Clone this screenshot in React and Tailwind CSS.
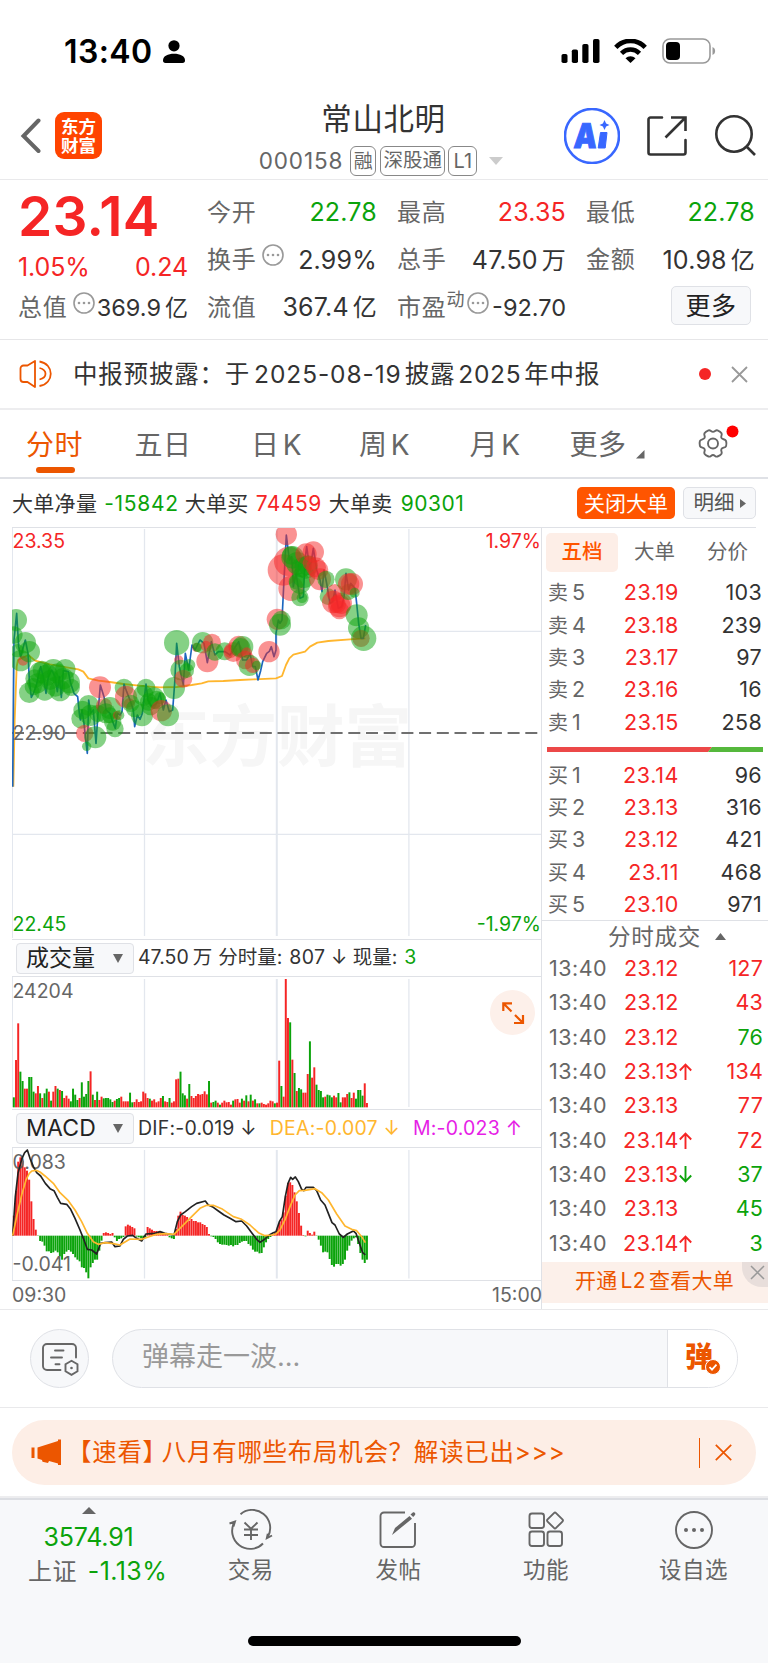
import React from "react";

const UP = "#f52525";
const DOWN = "#0ba30b";

const quoteRows = [
	[
		{ label: "今开", value: "22.78", color: "text-[#0ba30b]" },
		{ label: "最高", value: "23.35", color: "text-[#f52525]" },
		{ label: "最低", value: "22.78", color: "text-[#0ba30b]" },
	],
	[
		{ label: "换手", value: "2.99%", color: "text-[#333]", more: true },
		{ label: "总手", value: "47.50", unit: "万", color: "text-[#333]" },
		{ label: "金额", value: "10.98", unit: "亿", color: "text-[#333]" },
	],
];

const periodTabs = [
	{ label: "分时", width: "w-[109px]", active: true },
	{ label: "五日", width: "w-[108px]" },
	{ label: "日 K", width: "w-[119px]" },
	{ label: "周 K", width: "w-[97px]" },
	{ label: "月 K", width: "w-[124px]" },
	{ label: "更多", width: "w-[82px]" },
];

const asks = [
	["卖", 5, "23.19", 103],
	["卖", 4, "23.18", 239],
	["卖", 3, "23.17", 97],
	["卖", 2, "23.16", 16],
	["卖", 1, "23.15", 258],
];

const bids = [
	["买", 1, "23.14", 96],
	["买", 2, "23.13", 316],
	["买", 3, "23.12", 421],
	["买", 4, "23.11", 468],
	["买", 5, "23.10", 971],
];

const trades = [
	{ price: "23.12", volume: 127, up: true },
	{ price: "23.12", volume: 43, up: true },
	{ price: "23.12", volume: 76 },
	{ price: "23.13", volume: 134, up: true, arrow: "up" },
	{ price: "23.13", volume: 77, up: true },
	{ price: "23.14", volume: 72, up: true, arrow: "up" },
	{ price: "23.13", volume: 37, arrow: "down" },
	{ price: "23.13", volume: 45 },
	{ price: "23.14", volume: 3, arrow: "up" },
];

// All chart data is stored at 3x and scaled down inside the svg groups
const priceLine =
	"38,920 42,480 50,400 56,500 62,530 70,500 76,480 84,520 88,600 94,652 100,640 108,620 115,590 122,560 130,590 138,640 145,590 155,570 165,590 172,635 178,590 184,652 190,572 205,575 212,610 222,640 233,650 238,700 241,720 246,690 252,730 256,770 262,820 266,660 272,700 280,690 288,790 294,700 301,615 312,650 318,690 330,700 338,725 346,745 352,700 360,705 366,695 372,612 380,635 390,660 400,690 404,740 412,705 420,718 427,700 438,612 444,660 455,680 470,670 480,640 490,690 498,660 508,695 518,690 524,610 530,490 538,560 550,615 556,520 566,570 576,495 585,510 600,480 612,490 622,548 634,485 645,525 655,515 675,515 690,525 700,510 716,485 728,540 740,540 750,520 758,560 766,560 774,600 782,572 788,545 800,520 808,514 814,500 822,530 828,510 828,460 835,420 840,430 846,420 852,300 859,165 868,240 875,230 880,320 888,280 900,355 910,350 915,240 920,200 930,270 940,205 950,270 960,300 966,335 972,270 980,310 990,370 998,365 1005,330 1015,385 1025,380 1032,350 1038,280 1046,330 1052,310 1065,325 1070,370 1076,430 1083,475 1090,475 1097,435";

const averageLine =
	"40,920 44,720 50,560 54,540 85,525 105,542 150,553 200,562 235,568 250,575 265,595 295,602 330,606 370,612 410,616 450,620 480,622 530,621 575,615 605,610 625,604 670,603 720,600 760,598 828,595 846,588 858,555 868,535 880,524 915,515 930,500 952,488 985,483 1050,478 1096,475";

// [cx, cy, r]
const sellDots = [
	[48, 420, 33], [42, 465, 26], [76, 488, 32], [88, 515, 32], [62, 542, 32], [52, 512, 20],
	[104, 596, 28], [120, 578, 32], [88, 638, 31], [100, 620, 26], [112, 610, 30], [134, 630, 32],
	[126, 570, 28], [150, 600, 30], [160, 570, 33], [196, 568, 31], [172, 580, 30], [180, 632, 32],
	[166, 620, 30], [208, 608, 32], [214, 622, 26], [190, 596, 32], [142, 585, 32], [244, 716, 30],
	[248, 690, 28], [266, 676, 31], [272, 706, 32], [286, 772, 33], [294, 700, 26], [260, 799, 14],
	[330, 684, 33], [318, 700, 30], [330, 706, 24], [345, 746, 26], [338, 726, 26], [358, 706, 15],
	[372, 624, 28], [392, 670, 26], [404, 686, 26], [426, 706, 33], [438, 624, 28], [430, 646, 31],
	[452, 678, 28], [462, 654, 32], [470, 660, 28], [446, 666, 26], [480, 654, 18], [504, 706, 33],
	[530, 488, 38], [522, 624, 33], [542, 570, 31], [568, 555, 18], [560, 572, 22], [608, 488, 32],
	[645, 516, 26], [674, 514, 27], [728, 500, 32], [722, 504, 30], [748, 556, 32], [770, 556, 14],
	[592, 502, 14], [844, 420, 28], [840, 434, 33], [874, 226, 28], [878, 232, 34], [892, 250, 34],
	[905, 262, 30], [912, 290, 34], [900, 310, 32], [890, 305, 24], [918, 262, 34], [900, 353, 26],
	[906, 353, 16], [924, 256, 30], [978, 298, 26], [984, 350, 25], [1038, 298, 33], [1045, 336, 24],
	[1064, 338, 15], [1070, 406, 33], [1076, 444, 32], [1091, 475, 38],
];

const buyDots = [
	[69, 542, 15], [254, 760, 26], [300, 622, 33], [312, 678, 24], [352, 706, 13], [378, 650, 33],
	[388, 672, 17], [484, 692, 32], [536, 540, 14], [550, 596, 27], [590, 502, 14], [622, 544, 33],
	[636, 488, 27], [618, 498, 16], [700, 516, 30], [716, 498, 31], [692, 514, 20], [736, 540, 28],
	[740, 518, 16], [758, 556, 23], [807, 515, 32], [832, 418, 32], [859, 163, 32], [850, 270, 47],
	[866, 244, 44], [873, 325, 38], [918, 222, 32], [940, 216, 32], [930, 250, 22], [948, 262, 30],
	[955, 270, 30], [960, 298, 33], [1005, 338, 26], [1000, 366, 34], [1018, 378, 34],
	[1018, 390, 28], [1024, 370, 32], [1046, 312, 32], [1056, 312, 33], [1012, 374, 26], [1083, 475, 26],
];

// painted in time order so that later orders lie on top
const orderDots = [
	...sellDots.map(([x, y, r]) => ({ x, y, r, fill: DOWN })),
	...buyDots.map(([x, y, r]) => ({ x, y, r, fill: UP })),
].sort((a, b) => a.x - b.x);

const volumes =
	"g30 r142 r252 g107 g79 r56 r56 g91 g91 g47 r42 r64 g42 r28 g42 g56 r47 g20 r47 r64 g56 r52 g49 r28 r35 r26 g18 g56 g38 g22 r28 g75 g32 g40 g79 r108 g38 r22 g47 r22 r32 g27 g28 g28 g24 g16 r20 g25 g28 r32 r18 r18 r18 g44 g15 r16 r24 r16 r18 r47 r42 r28 g26 r20 r24 r15 r18 r28 g34 r18 r16 g28 r14 r18 r84 r86 g107 g42 g36 r26 g70 r34 r28 r34 r40 r38 r40 r48 r39 g79 r14 g16 g20 r14 g8 r14 r20 r15 r16 r8 g20 r24 r25 r14 g26 r20 g36 r18 g38 r20 g24 r12 g12 r14 r10 r8 r12 r20 r18 g12 r14 r140 g64 r32 r385 r268 g255 r143 g103 r49 g58 g54 r44 r44 r100 g198 r89 r120 g68 g52 g49 g30 r32 g38 g36 g30 r35 r30 g43 g15 r30 r30 r40 g45 r28 r44 g26 g52 g52 g35 r72 r13".split(" ");

const macdBars = [
	60, 135, 222, 235, 225, 205, 195, 168, 103, 50, 18, 0, -16, -18, -30, -47, -47, -52, -50, -45, -50,
	-62, -72, -55, -48, -43, -48, -55, -65, -72, -77, -95, -97, -110, -128, -95, -82, -72, -72, -45, -15,
	8, 10, 8, 5, 8, -5, -16, -10, -8, -4, 28, 33, 30, 26, 22, -3, -5, -8, -10, -6, 26, 22, 18, 14, 14, 12,
	10, 8, 5, 3, -5, -8, -10, 20, 60, 72, 62, 60, 56, 45, 50, 44, 44, 40, 40, 35, 32, 26, 5, -2, -4, -10,
	-20, -25, -27, -27, -28, -30, -28, -32, -28, -28, -22, -18, -16, -16, -25, -30, -42, -48, -48, -53, -52,
	-35, -20, -10, -4, 2, 8, 20, 38, 48, 70, 120, 158, 160, 152, 130, 103, 68, 30, 2, -2, 15, 8, 3, 12, 0,
	-12, -30, -50, -48, -50, -70, -88, -93, -85, -85, -90, -85, -72, -45, -30, -15, -8, -5, -25, -52, -72,
	-82, -72,
];

const difLine =
	"38,947 46,830 54,760 66,715 74,698 82,690 90,715 100,740 110,758 122,768 136,790 150,806 162,812 172,832 182,850 200,853 212,868 225,895 240,930 250,955 262,988 275,990 290,1002 302,970 316,968 335,966 345,980 360,978 370,958 382,948 398,946 410,955 425,963 438,942 465,940 480,935 495,940 522,945 532,905 542,885 556,875 575,860 590,850 616,843 625,855 640,862 655,873 672,885 690,895 708,905 725,903 740,918 755,938 770,958 780,967 795,957 808,945 820,938 828,935 838,905 847,890 856,830 864,790 872,772 878,778 886,771 895,785 905,808 912,812 918,802 940,802 950,812 962,840 975,855 985,880 996,908 1005,915 1018,942 1030,952 1042,942 1060,933 1068,940 1080,975 1088,998 1096,1005";

const deaLine =
	"38,947 50,890 65,825 78,780 88,760 96,753 108,751 120,756 135,768 160,790 180,818 205,842 225,870 245,905 262,940 280,965 295,973 315,968 340,971 360,975 390,957 425,958 465,944 495,941 522,943 545,920 575,890 600,865 620,856 640,856 665,866 700,890 725,898 750,915 775,938 795,947 815,945 828,942 840,930 855,900 870,860 885,825 898,812 915,811 945,806 965,818 985,840 1010,882 1035,918 1055,928 1070,932 1085,950 1096,968";

const barX = (i) => 38.5 + i * 6.58;

const StatusBar = () => (
	<div className="flex h-[100px] items-start pt-9 pl-16">
		<span className="text-[32px] leading-[31px] font-semibold text-black tracking-[0.400px]">13:40</span>
		<svg className="ml-[10px] mt-1" width="22" height="23" viewBox="0 0 22 23">
			<circle cx="11" cy="5.8" r="5.6" />
			<path d="M0 20.5C0 16 5 13.8 11 13.8s11 2.200 11 6.700c0 1.600-.8 2.500-2.500 2.500h-17C.8 23 0 22.100 0 20.500z" />
		</svg>
		<svg className="ml-auto mt-[3px]" width="39" height="24" viewBox="0 0 39 24">
			<rect x="0.500" y="15" width="6" height="9" rx="1.800" />
			<rect x="10.800" y="10.500" width="6.200" height="13.500" rx="1.800" />
			<rect x="21.300" y="5" width="6.200" height="19" rx="1.800" />
			<rect x="32" y="0" width="6.500" height="24" rx="1.800" />
		</svg>
		<svg className="ml-[14px] mt-[3px]" width="33" height="24" viewBox="0 0 33 24" fill="none" stroke="#000">
			<path d="M1.800 8.300C10-.3 23-.3 31.200 8.300" strokeWidth="4.600" />
			<path d="M7.500 14.300c5.300-5 12.700-5 18 0" strokeWidth="4.600" />
			<path d="M11.500 19.200c2.800-2.700 7.200-2.700 10 0l-5 4.800z" fill="#000" stroke="none" />
		</svg>
		<svg className="ml-[15px] mr-[52px] mt-[2px]" width="54" height="26" viewBox="0 0 54 26">
			<rect x="1" y="1" width="47" height="24" rx="7" fill="none" stroke="#999" strokeWidth="1.600" />
			<rect x="4" y="4" width="14" height="18" rx="4" />
			<path d="M50.500 9c3.500 1.300 3.500 6.700 0 8z" fill="#999" />
		</svg>
	</div>
);

const Header = () => (
	<header className="flex h-20 border-b border-[#e9e9eb]">
		<div className="flex w-[250px] pl-5">
			<svg className="mt-[18px]" width="22" height="36" viewBox="0 0 22 36" fill="none" stroke="#666" strokeWidth="4" strokeLinecap="round">
				<path d="M18.500 2.500L3.500 18l15 15" />
			</svg>
			<div className="ml-[13px] mt-3 flex size-[47px] flex-col items-center justify-center rounded-[9px] bg-[#ff4400] text-[17.500px] leading-[19px] font-bold text-white">
				<span>东方</span>
				<span>财富</span>
			</div>
		</div>
		<div className="flex w-[267px] flex-col items-center">
			<h1 className="mt-[3px] text-[30.500px] leading-8 tracking-[0.600px] text-[#333]">常山北明</h1>
			<div className="-ml-[5px] mt-[11px] flex h-[30px] items-center text-[#666]">
				<span className="text-[22.500px] tracking-[0.900px]">000158</span>
				<span className="ml-[7px] flex h-[30px] w-[26px] items-center justify-center rounded-md border border-[#888] text-[19px]">融</span>
				<span className="ml-1 flex h-[30px] w-[65px] items-center justify-center rounded-md border border-[#888] text-[19.500px]">深股通</span>
				<span className="ml-[3px] flex h-[30px] w-[29px] items-center justify-center rounded-md border border-[#888] text-[20px]">L1</span>
				<svg className="ml-3" width="14" height="8" viewBox="0 0 14 8">
					<path d="M0 0h14L7 8z" fill="#ccc" />
				</svg>
			</div>
		</div>
		<div className="flex flex-1 items-start">
			<svg className="ml-[47px] mt-2" width="56" height="56" viewBox="0 0 56 56">
				<circle cx="28" cy="28" r="27" fill="none" stroke="#3867ff" strokeWidth="2.600" />
				<text x="9" y="40" fontFamily="Inter" fontSize="34" fontWeight="900" fill="#3867ff" stroke="#3867ff" strokeWidth="1" textLength="23" lengthAdjust="spacingAndGlyphs" transform="skewX(-4) translate(3 0)">A</text>
				<path d="M36.500 24.500h6.500l-1.800 15.500h-7z" fill="#3867ff" stroke="#3867ff" strokeWidth="1" />
				<path d="M40.500 12l1.600 3.400 3.400 1.600-3.400 1.600-1.600 3.400-1.600-3.400-3.400-1.600 3.400-1.600z" fill="#3867ff" />
			</svg>
			<svg className="ml-[27px] mt-4" width="40" height="40" viewBox="0 0 40 40" fill="none" stroke="#333" strokeWidth="2.600">
				<path d="M15 1.500H3.500a2 2 0 0 0-2 2v33a2 2 0 0 0 2 2h33a2 2 0 0 0 2-2V24" strokeLinecap="round" />
				<path d="M24 1.500h14.500V15M38 2L18.500 21.500" />
			</svg>
			<svg className="ml-[28px] mt-[15px]" width="42" height="42" viewBox="0 0 42 42" fill="none" stroke="#333" strokeWidth="2.600">
				<circle cx="19" cy="19" r="17.700" />
				<path d="M31.500 31.500L40 40" />
			</svg>
		</div>
	</header>
);

const MoreDot = ({ className }) => (
	<svg className={className} width="22" height="22" viewBox="0 0 22 22" fill="#999">
		<circle cx="11" cy="11" r="10" fill="none" stroke="#999" strokeWidth="1.600" />
		<circle cx="6" cy="11" r="1.300" />
		<circle cx="11" cy="11" r="1.300" />
		<circle cx="16" cy="11" r="1.300" />
	</svg>
);

const QuoteCell = ({ label, value, unit, color, more }) => (
	<div className="flex items-center">
		<span className="text-[24px] tracking-[0.800px] text-[#666]">{label}</span>
		{more && <MoreDot className="ml-[5px] mb-2.5" />}
		<span className={"ml-auto text-[25px] tracking-[0.200px] " + color}>
			{value}
			{unit && <span className="ml-1 text-[24px]">{unit}</span>}
		</span>
	</div>
);

const Quote = () => (
	<section className="flex h-40 border-b border-[#e6e6e8] text-[25px] leading-none">
		<div className="w-[170px] ml-[18px]">
			<div className="h-[63px] pt-[9px] text-[55px] leading-[54px] font-semibold tracking-[0.200px] text-[#f52525]">23.14</div>
			<div className="flex h-[48px] items-center justify-between text-[25px] tracking-[-0.100px] text-[#f52525]">
				<span>1.05%</span>
				<span>0.24</span>
			</div>
			<div className="flex h-[34px] items-center whitespace-nowrap text-[#333]">
				<span className="text-[24px] tracking-[0.800px] text-[#666]">总值</span>
				<MoreDot className="ml-[5px] mb-2.5 shrink-0" />
				<span className="ml-auto text-[23.500px] tracking-[0px]">369.9<span className="ml-1 text-[23px]">亿</span></span>
			</div>
		</div>
		<div className="ml-[19px] w-[547px] pt-[9px]">
			{quoteRows.map((row, i) => (
				<div key={i} className="grid h-[47.500px] grid-cols-[170px_169px_169px] gap-x-5">
					{row.map((cell) => (
						<QuoteCell key={cell.label} {...cell} />
					))}
				</div>
			))}
			<div className="grid h-[47.500px] grid-cols-[170px_169px_169px] gap-x-5">
				<QuoteCell label="流值" value="367.4" unit="亿" color="text-[#333]" />
				<div className="flex items-center whitespace-nowrap">
					<span className="text-[24px] tracking-[0.800px] text-[#666]">市盈</span>
					<span className="mb-4 text-[18px] text-[#666]">动</span>
					<MoreDot className="ml-[2px] mb-2.5 shrink-0" />
					<span className="ml-auto text-[23.500px] tracking-[0px] text-[#333]">-92.70</span>
				</div>
				<div className="flex items-center justify-end">
					<button className="mr-1 mb-1 flex h-[39px] w-20 items-center justify-center rounded-[5px] border border-[#dfe1e6] bg-[#f7f8fa] pt-px text-[25px] tracking-[0.500px] text-[#222]">
						更多
					</button>
				</div>
			</div>
		</div>
	</section>
);

const Notice = () => (
	<section className="flex h-[70px] items-center border-b-2 border-[#ededef] pl-[19px]">
		<svg width="34" height="30" viewBox="0 0 34 30" fill="none" stroke="#ec5600" strokeWidth="1.800">
			<path d="M16 2L8.500 6.500H4.500a3 3 0 0 0-3 3v10.500a3 3 0 0 0 3 3h4L16 28z" strokeLinejoin="round" />
			<path d="M20.500 2.500c15 2.500 15 22 0 24.500M20.500 9c8 2 8 9.500 0 11.500" />
		</svg>
		<p className="ml-5 whitespace-nowrap text-[24.500px] tracking-[0.800px] text-[#333]">
			中报预披露：于<span className="ml-1 mr-[3px] tracking-[0.900px]">2025-08-19</span>披露<span className="mx-[3px] tracking-[0.700px]">2025</span>年中报
		</p>
		<span className="ml-auto size-3 rounded-full bg-[#f52525]" />
		<svg className="ml-5 mr-5" width="17" height="17" viewBox="0 0 17 17" stroke="#999" strokeWidth="1.800">
			<path d="M1 1l15 15M16 1L1 16" />
		</svg>
	</section>
);

const PeriodTabs = () => (
	<nav className="flex h-[69px] border-b-2 border-[#dfe1e6] text-[28px] text-[#666]">
		{periodTabs.map((tab) => (
			<div key={tab.label} className={"flex flex-col items-center pt-[18px] " + tab.width}>
				<span className={"leading-[34px] tracking-[0.500px] [word-spacing:-5px] whitespace-nowrap " + (tab.active ? "text-[#ec5600]" : "")}>{tab.label}</span>
				{tab.active && <span className="mt-[5px] mr-[-1px] h-1.5 w-[39px] rounded-full bg-[#ec5600]" />}
			</div>
		))}
		<svg className="-ml-[3px] mt-10" width="9" height="9" viewBox="0 0 9 9">
			<path d="M8.500 0v8.500H0z" fill="#666" />
		</svg>
		<svg className="ml-[51px] mt-[15px]" width="44" height="40" viewBox="0 0 44 40" fill="none" stroke="#666" strokeWidth="1.900">
			<path d="M12.500 5.500c2-.8 2.500 1.500 4.500 1.500s2.500-2.300 4.500-1.500c2 .8 3.200 1.500 4 2.800 1 2-1 3-.1 4.700s4 1 4.700 3.200c.5 1.700.5 3.100 0 4.800-.7 2.200-3.800 1.400-4.700 3.200s1.100 2.800.1 4.600c-.8 1.300-2 2-4 2.800-2 .8-2.500-1.500-4.500-1.500s-2.500 2.300-4.500 1.500c-2-.8-3.200-1.500-4-2.800-1-1.800 1-2.800.1-4.600s-4-1-4.700-3.200c-.5-1.700-.5-3.100 0-4.800.7-2.200 3.800-1.400 4.700-3.200s-1.100-2.700-.1-4.700c.8-1.300 2-2 4-2.800z" transform="translate(0 -.1)" />
			<circle cx="17" cy="18.500" r="5" />
			<circle cx="36.500" cy="6.500" r="6" fill="#f00" stroke="none" />
		</svg>
	</nav>
);

const OrderSummary = () => (
	<div className="mx-3 flex h-[49px] items-center border-b border-[#dfe1e6] whitespace-nowrap text-[21px] text-[#333]">
		<span className="tracking-[0.300px]">大单净量</span>
		<span className="ml-[7px] tracking-[0.700px] text-[#0ba30b]">-15842</span>
		<span className="ml-[6px] tracking-[0.300px]">大单买</span>
		<span className="ml-[7px] tracking-[0.500px] text-[#f52525]">74459</span>
		<span className="ml-[7px] tracking-[0.300px]">大单卖</span>
		<span className="ml-2 tracking-[0.500px] text-[#0ba30b]">90301</span>
		<button className="ml-auto h-8 w-[98px] rounded-[5px] bg-[#ff5500] text-[21px] text-white">关闭大单</button>
		<button className="ml-2 flex h-8 w-[73px] items-center justify-center rounded-[5px] border border-[#dfe1e6] bg-[#f7f8fa] text-[20.500px] text-[#555]">
			明细
			<svg className="ml-[5px]" width="6" height="9" viewBox="0 0 6 9">
				<path d="M0 0l6 4.500L0 9z" fill="#666" />
			</svg>
		</button>
	</div>
);

const PriceChart = () => (
	<svg className="block" width="530" height="411" viewBox="12 528 530 411" fontFamily="Inter, sans-serif" fontSize="19.500">
		<text x="142" y="761" fontFamily="'Noto Sans CJK SC', sans-serif" fontSize="67.500" fontWeight="700" fill="#f6f6f6">东方财富</text>
		<g stroke="#e3e7ee" fill="none">
			<path d="M12.500 528V938" />
			<path d="M144.500 529V936M408.900 529V936M12 631.400H541M12 834.400H541" strokeWidth="1.300" />
			<path d="M276.800 529V936" strokeWidth="2" />
		</g>
		<path d="M12 733H541" stroke="#707070" strokeWidth="2.200" strokeDasharray="12 5.700" />
		<g transform="translate(0 480) scale(.33333)" fill="none" strokeLinejoin="round">
			<polyline points={averageLine} stroke="#ffb62e" strokeWidth="5.500" />
			<polyline points={priceLine} stroke="#1c66bf" strokeWidth="5" />
			{orderDots.map((dot, i) => (
				<circle key={i} cx={dot.x} cy={dot.y} r={dot.r} fill={dot.fill} fillOpacity=".5" />
			))}
		</g>
		<text x="12.500" y="547.500" fill={UP}>23.35</text>
		<text x="541" y="547.500" textAnchor="end" fill={UP}>1.97%</text>
		<text x="12.500" y="739.500" fill="#666">22.90</text>
		<text x="12.500" y="931" fill={DOWN}>22.45</text>
		<text x="541" y="931" textAnchor="end" fill={DOWN}>-1.97%</text>
	</svg>
);

const IndicatorSelect = ({ children }) => (
	<button className="ml-1 mr-1 flex h-[31px] w-[118px] items-center justify-between rounded-[4px] border border-[#dfe1e6] bg-[#f7f8fa] pl-[9px] pr-2.5 text-[23px] text-[#222]">
		{children}
		<svg width="10" height="9" viewBox="0 0 10 9">
			<path d="M0 0h10L5 9z" fill="#666" />
		</svg>
	</button>
);

const VolumeChart = () => (
	<div className="relative h-[132px]">
		<svg className="block" width="530" height="132" viewBox="12 977 530 132" fontFamily="Inter, sans-serif" fontSize="19.500">
			<g stroke="#e3e7ee" fill="none">
				<path d="M12.500 977V1107" />
				<path d="M144.500 979V1107M408.900 979V1107" strokeWidth="1.300" />
				<path d="M276.800 979V1107" strokeWidth="2" />
			</g>
			<g transform="translate(0 920) scale(.33333)">
				{volumes.map((bar, i) => (
					<rect key={i} x={barX(i)} y={562 - Number(bar.slice(1))} width="5.900" height={bar.slice(1)} fill={bar[0] === "r" ? UP : DOWN} />
				))}
			</g>
			<text x="12.500" y="998" fill="#666">24204</text>
		</svg>
		<button className="absolute right-[6px] top-[13px] flex size-[45px] items-center justify-center rounded-full bg-[#fdf0ea]">
			<svg width="24" height="24" viewBox="0 0 24 24" fill="none" stroke="#ec5600" strokeWidth="2.200">
				<path d="M2.300 10V2.300H11M2.500 2.500l8 8M22 14v8h-9M22 22l-8-8" />
			</svg>
		</button>
	</div>
);

const MacdChart = () => (
	<svg className="block" width="530" height="132" viewBox="12 1148 530 132" fontFamily="Inter, sans-serif" fontSize="19.500">
		<g stroke="#e3e7ee" fill="none">
			<path d="M12.500 1148V1280" />
			<path d="M144.500 1150V1278.500M408.900 1150V1278.500" strokeWidth="1.300" />
			<path d="M276.800 1150V1278.500" strokeWidth="2" />
		</g>
		<g transform="translate(0 920) scale(.33333)">
			{macdBars.map((value, i) => (
				<rect key={i} x={barX(i)} y={value > 0 ? 947 - value : 947} width="5.900" height={Math.max(Math.abs(value), 1)} fill={value > 0 ? UP : DOWN} />
			))}
		</g>
		<text x="12.500" y="1169" fill="#666">0.083</text>
		<text x="12.500" y="1271" fill="#666">-0.041</text>
		<g transform="translate(0 920) scale(.33333)" fill="none" strokeLinejoin="round" strokeWidth="5">
			<polyline points={difLine} stroke="#222" />
			<polyline points={deaLine} stroke="#ffb62e" />
		</g>
	</svg>
);

const Charts = () => (
	<div className="ml-3 w-[530px] border-r border-[#dfe1e6]">
		<PriceChart />
		<div className="flex h-[38px] items-center border-y border-[#dfe1e6] whitespace-nowrap text-[19.500px] text-[#333]">
			<IndicatorSelect>成交量</IndicatorSelect>
			<span>47.50</span>
			<span className="ml-1">万</span>
			<span className="ml-[6px]">分时量:</span>
			<span className="ml-[7px] tracking-[0.300px]">807 ↓</span>
			<span className="ml-[5px]">现量:</span>
			<span className="ml-[7px] text-[#0ba30b]">3</span>
		</div>
		<VolumeChart />
		<div className="flex h-[39px] items-center border-y border-[#dfe1e6] whitespace-nowrap text-[19.500px] tracking-[0.200px] text-[#333]">
			<IndicatorSelect>MACD</IndicatorSelect>
			<span>DIF:-0.019 ↓</span>
			<span className="ml-[13px] text-[#ffb62e]">DEA:-0.007 ↓</span>
			<span className="ml-[13px] text-[#e61ee6]">M:-0.023 ↑</span>
		</div>
		<MacdChart />
		<div className="-mr-px flex h-7 items-center justify-between border-t border-[#dfe1e6] pt-[3px] text-[19.500px] text-[#666]">
			<span>09:30</span>
			<span>15:00</span>
		</div>
	</div>
);

const BookRow = ({ row: [side, level, price, volume] }) => (
	<div className="flex h-[32.300px] items-center pl-[6px] pr-[6px] text-[21.500px]">
		<span className="w-[76px] text-[#666]">
			<span className="mr-1 text-[20px]">{side}</span>
			{level}
		</span>
		<span className="flex w-[55px] justify-end tracking-[0.600px] text-[#f52525]">{price}</span>
		<span className="ml-auto tracking-[0.300px] text-[#333]">{volume}</span>
	</div>
);

const Arrow = ({ up }) => (
	<svg width="13" height="17" viewBox="0 0 13 17" fill="none" stroke={up ? UP : DOWN} strokeWidth="1.900">
		<path d={up ? "M6.500 17V2M.8 7.500L6.500 1.700l5.700 5.800" : "M6.500 0v15M.8 9.500l5.700 5.800 5.700-5.800"} />
	</svg>
);

const OrderBook = () => (
	<aside className="w-[226px]">
		<div className="mt-[5px] ml-[4px] flex h-[39px] items-center text-[20.500px] text-[#666]">
			<span className="flex h-[39px] w-[72px] items-center justify-center rounded-[5px] bg-[#fdeee7] font-medium text-[#ff5500]">五档</span>
			<span className="w-[73px] text-center">大单</span>
			<span className="w-[73px] text-center">分价</span>
		</div>
		<div className="mt-[5px]">
			{asks.map((row) => (
				<BookRow key={row[1]} row={row} />
			))}
		</div>
		<svg className="ml-[5px] mt-[9px] block" width="216" height="5" viewBox="0 0 216 5">
			<path d="M0 0h165l-4 5H0z" fill="#ec4848" />
			<path d="M165 0h51v5h-55z" fill="#55b83c" />
		</svg>
		<div className="mt-[7px] h-[161px]">
			{bids.map((row) => (
				<BookRow key={row[1]} row={row} />
			))}
		</div>
		<div className="flex h-[31px] items-center justify-center border-t border-[#dfe1e6] pt-px text-[22.500px] tracking-[0.700px] text-[#666]">
			<span className="ml-6">分时成交</span>
			<svg className="ml-3.5" width="11" height="7" viewBox="0 0 11 7">
				<path d="M5.500 0L11 7H0z" fill="#666" />
			</svg>
		</div>
		<div className="h-[310.500px]">
			{trades.map((trade, i) => (
				<div key={i} className="flex h-[34.350px] items-center pl-[7px] pr-[5px] text-[21.500px]">
					<span className="w-[75px] tracking-[0.500px] text-[#666]">13:40</span>
					<span className="flex w-[55px] justify-end tracking-[0.600px] text-[#f52525]">{trade.price}</span>
					{trade.arrow && <Arrow up={trade.arrow === "up"} />}
					<span className={"ml-auto tracking-[0.200px] " + (trade.up ? "text-[#f52525]" : "text-[#0ba30b]")}>{trade.volume}</span>
				</div>
			))}
		</div>
		<div className="relative flex h-[41px] items-center bg-[#fcf0ea] pb-1 pl-[33px] text-[21px] tracking-[0.300px] text-[#ec5600]">
			开通<span className="mx-[3px]">L2</span>查看大单
			<span className="absolute top-0 right-0 flex h-[25px] w-[26px] items-center justify-center rounded-bl-[20px] bg-[#e8dedb]">
				<svg className="ml-1 mb-1" width="15" height="15" viewBox="0 0 15 15" stroke="#999" strokeWidth="1.500">
					<path d="M1 1l13 13M14 1L1 14" />
				</svg>
			</span>
		</div>
	</aside>
);

const CommentBar = () => (
	<section className="flex h-[99px] items-center border-y border-[#e9e9eb] pl-[30px]">
		<button className="flex size-[59px] items-center justify-center rounded-full border border-[#dfe1e6] bg-[#f7f8fa]">
			<svg width="38" height="34" viewBox="0 0 38 34" fill="none" stroke="#666" strokeWidth="1.900" strokeLinecap="round">
				<path d="M19.500 28H6a4 4 0 0 1-4-4V6a4 4 0 0 1 4-4h25a4 4 0 0 1 4 4v9.500" />
				<path d="M14 8.500h8.500M10 15.500h11M14.500 22.300h4" />
				<path d="M30.500 19l6 3.500v7l-6 3.500-6-3.500v-7z" transform="translate(0 -.2)" />
				<circle cx="30.500" cy="26" r="1.300" fill="#666" stroke="none" />
			</svg>
		</button>
		<div className="ml-[23px] flex h-[59px] w-[626px] overflow-hidden rounded-full border border-[#dfe1e6] bg-[#f7f8fa]">
			<span className="flex-1 pt-[9px] pl-[29px] text-[27px] leading-9 tracking-[0px] text-[#999]">弹幕走一波...</span>
			<span className="flex w-[70px] items-center border-l border-[#dfe1e6] bg-white pl-[17px]">
				<span className="relative -mt-1 text-[28px] font-black text-[#ec5600]">
					弹
					<svg className="absolute -right-2 -bottom-1" width="16" height="16" viewBox="0 0 16 16">
						<circle cx="8" cy="8" r="7.500" fill="#ec5600" stroke="#fff" />
						<path d="M4.500 8l2.500 2.700 4.500-5" fill="none" stroke="#fff" strokeWidth="1.800" />
					</svg>
				</span>
			</span>
		</div>
	</section>
);

const Promo = () => (
	<section className="h-[90px] border-b-2 border-[#ededef] px-3 pt-3">
		<div className="flex h-[65px] items-center rounded-full bg-[#fdeee6] pl-[19px] text-[24.500px] text-[#ec5600]">
			<svg width="31" height="27" viewBox="0 0 31 27" fill="#ec5600">
				<path d="M.5 8.500h3V19h-3zM6.500 8.500L27 2V.5h3V26h-3v-1.500L18 22l-1 2-5.500-1.200-.5-1.800-4.500-1.500z" />
			</svg>
			<span className="ml-[5px] whitespace-nowrap tracking-[0.700px]"><span className="-mr-1.5">【速看】</span>八月有哪些布局机会？解读已出&gt;&gt;&gt;</span>
			<span className="ml-auto h-[30px] w-px bg-[#ec5600]" />
			<svg className="ml-[15px] mr-6" width="17" height="17" viewBox="0 0 17 17" stroke="#ec5600" strokeWidth="1.700">
				<path d="M.8.8l15.400 15.400M16.200.8L.8 16.200" />
			</svg>
		</div>
	</section>
);

const NavItem = ({ label, children }) => (
	<div className="flex w-[147.600px] flex-col items-center">
		<svg className="mt-[9px]" width="46" height="42" viewBox="0 0 46 42" fill="none" stroke="#666" strokeWidth="1.900">
			{children}
		</svg>
		<span className="mt-[6px] text-[22.500px] leading-[26px] tracking-[0.500px] text-[#666]">{label}</span>
	</div>
);

const BottomNav = () => (
	<footer className="h-[165px] border-t-2 border-[#dcdee3] bg-[#f7f8fa]">
		<div className="flex h-[136px]">
			<div className="w-[177px] pt-[7px]">
				<svg className="ml-[82px] block" width="14" height="7" viewBox="0 0 14 7">
					<path d="M7 0l7 7H0z" fill="#666" />
				</svg>
				<p className="mt-[6px] text-center text-[25px] leading-[34px] tracking-[-0.200px] text-[#0ba30b]">3574.91</p>
				<p className="ml-7 whitespace-nowrap text-[25px] leading-[34px] tracking-[0.400px] text-[#0ba30b]">
					<span className="mr-[11px] text-[24px]  tracking-[0.400px] text-[#666]">上证</span>-1.13%
				</p>
			</div>
			<NavItem label="交易">
				<path d="M12.500 5.200A18 18 0 0 1 40 27.500M35 34.500A18 18 0 0 1 6.500 13M1.500 14.500l5.500-2-1.500 5M44 26.500l-5.200 2.800 1-4.500" />
				<path d="M16.500 13.500l6.500 6.300 6.500-6.300M23 19.800V31M16 20.500h14M16 26h14" />
			</NavItem>
			<NavItem label="发帖">
				<path d="M30 3.500H9a3.500 3.500 0 0 0-3.500 3.500v27.500A3.500 3.500 0 0 0 9 38h27.500a3.500 3.500 0 0 0 3.500-3.500V14" />
				<path d="M17 26l3-7L34.500 7l2.500 2.700L21 22.800zM35.500 5.500l2.300-2c1.500-.8 3.200 1 2.200 2.500l-1.800 2z" fill="#666" stroke="none" />
			</NavItem>
			<NavItem label="功能">
				<rect x="6.500" y="4.500" width="14.500" height="14.500" rx="2.500" />
				<rect x="6.500" y="22.500" width="14.500" height="14.500" rx="2.500" />
				<rect x="24.500" y="22.500" width="14.500" height="14.500" rx="2.500" />
				<rect x="26" y="5.500" width="12" height="12" rx="1.500" transform="rotate(45 32 11.500)" />
			</NavItem>
			<NavItem label="设自选">
				<circle cx="23" cy="21" r="18" />
				<g fill="#666" stroke="none">
					<circle cx="15" cy="21" r="2" />
					<circle cx="23" cy="21" r="2" />
					<circle cx="31" cy="21" r="2" />
				</g>
			</NavItem>
		</div>
		<div className="ml-[248px] h-2.5 w-[273px] rounded-full bg-black" />
	</footer>
);

const App = () => {
	return (
		<div className="h-[1663px] w-[768px] overflow-hidden bg-white font-['Inter','Noto_Sans_CJK_SC',sans-serif] leading-none">
			<StatusBar />
			<Header />
			<Quote />
			<Notice />
			<PeriodTabs />
			<OrderSummary />
			<main className="flex h-[781px]">
				<Charts />
				<OrderBook />
			</main>
			<CommentBar />
			<Promo />
			<BottomNav />
		</div>
	);
};

export default App;
